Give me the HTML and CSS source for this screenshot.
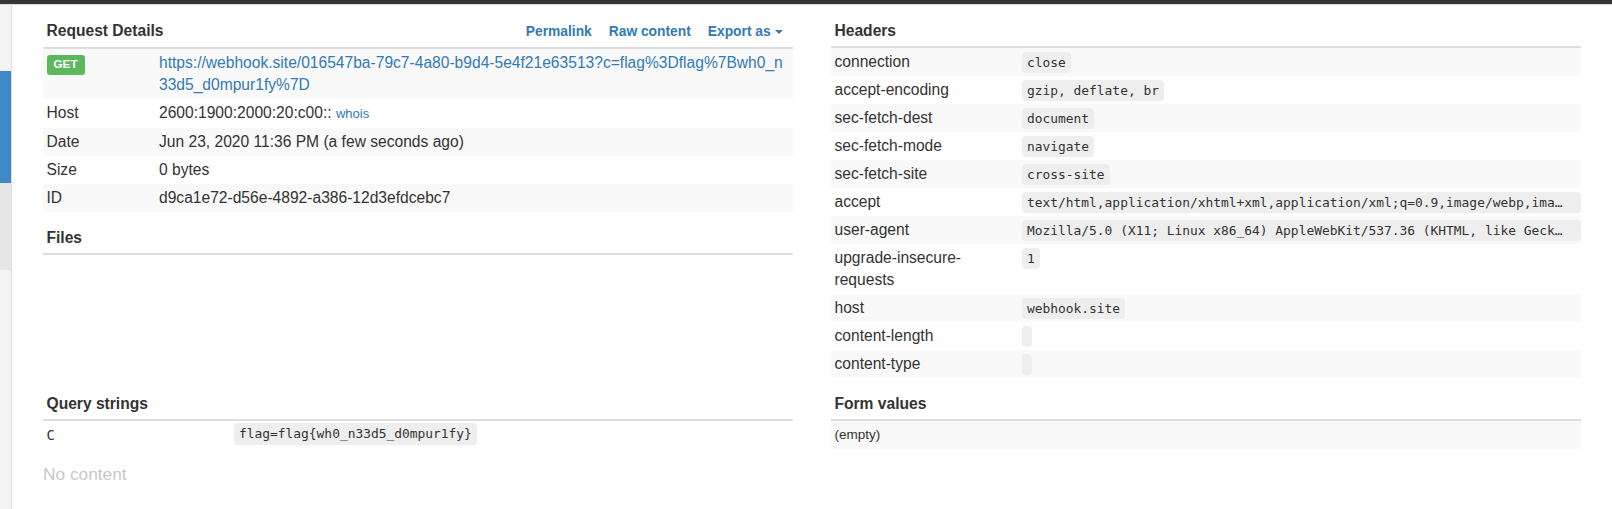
FILE: index.html
```html
<!DOCTYPE html>
<html lang="en">
<head>
<meta charset="utf-8">
<title>Webhook request</title>
<link rel="stylesheet" href="styles.css">
</head>
<body>
<div class="topbar"></div>
<div class="layout">
  <aside class="sidebar">
    <div class="sb-gap"></div>
    <div class="sb-active"></div>
    <div class="sb-item"></div>
  </aside>
  <main class="content">
    <div class="col">
      <section class="panel">
        <div class="panel-head with-actions">
          <span class="title">Request Details</span>
          <nav class="actions">
            <a href="#">Permalink</a>
            <a href="#">Raw content</a>
            <a href="#">Export as <span class="caret"></span></a>
          </nav>
        </div>
        <table class="kv striped">
          <colgroup><col class="c15"><col></colgroup>
          <tr>
            <td><span class="badge">GET</span></td>
            <td><a class="url" href="#">https://webhook.site/016547ba-79c7-4a80-b9d4-5e4f21e63513?c=flag%3Dflag%7Bwh0_n33d5_d0mpur1fy%7D</a></td>
          </tr>
          <tr><td>Host</td><td>2600:1900:2000:20:c00:: <a class="whois" href="#">whois</a></td></tr>
          <tr><td>Date</td><td>Jun 23, 2020 11:36 PM (a few seconds ago)</td></tr>
          <tr><td>Size</td><td>0 bytes</td></tr>
          <tr><td>ID</td><td>d9ca1e72-d56e-4892-a386-12d3efdcebc7</td></tr>
        </table>
      </section>
      <section class="panel">
        <div class="panel-head"><span class="title">Files</span></div>
      </section>
    </div>

    <div class="col">
      <section class="panel">
        <div class="panel-head"><span class="title">Headers</span></div>
        <table class="kv striped hdr">
          <colgroup><col class="c25"><col></colgroup>
          <tr><td>connection</td><td class="v"><code class="code">close</code></td></tr>
          <tr><td>accept-encoding</td><td class="v"><code class="code">gzip, deflate, br</code></td></tr>
          <tr><td>sec-fetch-dest</td><td class="v"><code class="code">document</code></td></tr>
          <tr><td>sec-fetch-mode</td><td class="v"><code class="code">navigate</code></td></tr>
          <tr><td>sec-fetch-site</td><td class="v"><code class="code">cross-site</code></td></tr>
          <tr><td>accept</td><td class="v"><code class="code wide">text/html,application/xhtml+xml,application/xml;q=0.9,image/webp,ima…</code></td></tr>
          <tr><td>user-agent</td><td class="v"><code class="code wide">Mozilla/5.0 (X11; Linux x86_64) AppleWebKit/537.36 (KHTML, like Geck…</code></td></tr>
          <tr><td>upgrade-insecure-requests</td><td class="v"><code class="code">1</code></td></tr>
          <tr><td>host</td><td class="v"><code class="code">webhook.site</code></td></tr>
          <tr><td>content-length</td><td class="v"><code class="code"></code></td></tr>
          <tr><td>content-type</td><td class="v"><code class="code"></code></td></tr>
        </table>
      </section>
    </div>

    <div class="col">
      <section class="panel">
        <div class="panel-head"><span class="title">Query strings</span></div>
        <table class="kv">
          <colgroup><col class="c25"><col></colgroup>
          <tr><td><span class="qkey">C</span></td><td><code class="code q">flag=flag{wh0_n33d5_d0mpur1fy}</code></td></tr>
        </table>
        <p class="none">No content</p>
      </section>
    </div>

    <div class="col">
      <section class="panel">
        <div class="panel-head"><span class="title">Form values</span></div>
        <table class="kv striped">
          <tr><td class="small">(empty)</td></tr>
        </table>
      </section>
    </div>
  </main>
</div>
</body>
</html>
```
FILE: styles.css
```css
* { box-sizing: border-box; }

html, body {
  margin: 0;
  height: 100%;
}

body {
  font-family: "Liberation Sans", Arial, sans-serif;
  font-size: 15.6px;
  line-height: 22px;
  color: #333;
  background: #fff;
  overflow: hidden;
}

.topbar {
  height: 5px;
  background: #363636;
  border-bottom: 1px solid #d9d9d9;
}

.layout {
  display: flex;
  height: calc(100% - 5px);
}

.sidebar {
  width: 12px;
  flex: none;
  background: #f3f3f3;
  border-right: 1px solid #dfdfdf;
  display: flex;
  flex-direction: column;
}

.sb-gap { height: 66px; }
.sb-active { height: 112px; background: #3f88c8; }
.sb-item { height: 87px; background: #e6e6e6; }

.content {
  flex: 1;
  padding: 0 31px;
  display: grid;
  grid-template-columns: 750px 750px;
  column-gap: 38px;
  align-content: start;
}

.panel-head {
  display: flex;
  align-items: baseline;
  justify-content: space-between;
  padding: 15px 3.5px 4px;
  border-bottom: 2px solid #ddd;
  font-weight: bold;
}

.panel-head.with-actions { padding-bottom: 5px; }

.actions {
  display: flex;
  gap: 17px;
  margin-right: 7px;
  font-size: 13.8px;
  line-height: 16px;
}

.actions a {
  color: #337ab7;
  text-decoration: none;
  font-weight: bold;
}

.caret {
  display: inline-block;
  width: 0;
  height: 0;
  border-top: 4.5px solid;
  border-left: 4.5px solid transparent;
  border-right: 4.5px solid transparent;
  vertical-align: middle;
}

.kv {
  width: 100%;
  border-collapse: collapse;
  table-layout: fixed;
}

.c15 { width: 15%; }
.c25 { width: 25%; }

.kv td {
  padding: 3px 3.5px;
  vertical-align: top;
}

.striped tr:nth-child(odd) td { background: #f9f9f9; }

.hdr td.v { padding-right: 0; }

.badge {
  display: inline-block;
  vertical-align: top;
  margin-top: 3px;
  background: #5cb85c;
  color: #fff;
  font-weight: bold;
  font-size: 11.7px;
  line-height: 12px;
  padding: 3px 7px 5px;
  border-radius: 3px;
}

.url {
  color: #337ab7;
  text-decoration: none;
  word-break: break-all;
}

.whois {
  color: #337ab7;
  text-decoration: none;
  font-size: 13px;
}

.code {
  display: inline-block;
  vertical-align: top;
  margin-top: 1px;
  font-family: "DejaVu Sans Mono", "Liberation Mono", monospace;
  font-size: 12.9px;
  line-height: 17px;
  min-height: 21px;
  padding: 2px 5px;
  background: #eeeeee;
  border-radius: 4px;
  color: #333;
  white-space: nowrap;
}

.code.wide { width: 100%; }

.code.q {
  margin-top: -1px;
  line-height: 18px;
  min-height: 22px;
}

.qkey {
  font-family: "DejaVu Sans Mono", "Liberation Mono", monospace;
  font-size: 13.8px;
}

.small { font-size: 13.5px; }

.none {
  margin: 13px 0 0;
  font-size: 17.3px;
  line-height: 24px;
  color: #c8c8c8;
}
```
